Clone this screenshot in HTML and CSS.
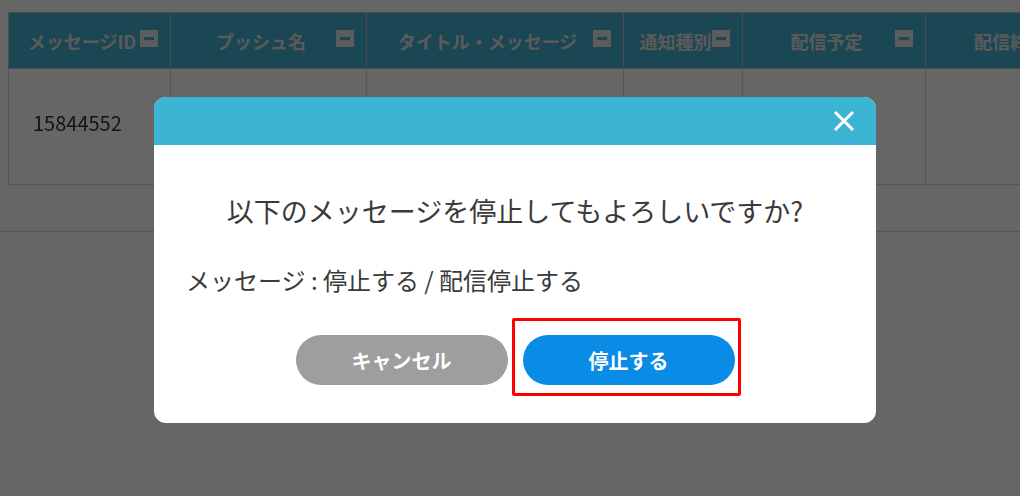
FILE: index.html
```html
<!DOCTYPE html>
<html lang="ja">
<head>
  <meta charset="UTF-8">
  <meta name="viewport" content="width=device-width, initial-scale=1.0">
  <title>メッセージ一覧</title>
  <link rel="stylesheet" href="styles.css">
</head>
<body>

  <div class="page">
    <div class="list">
      <div class="table-wrap">
        <table class="msg-table">
          <colgroup>
            <col class="c-id">
            <col class="c-push">
            <col class="c-title">
            <col class="c-type">
            <col class="c-plan">
            <col class="c-end">
          </colgroup>
          <thead>
            <tr>
              <th>メッセージID<span class="toggle"></span></th>
              <th>プッシュ名<span class="toggle"></span></th>
              <th>タイトル・メッセージ<span class="toggle"></span></th>
              <th>通知種別<span class="toggle"></span></th>
              <th>配信予定<span class="toggle"></span></th>
              <th>配信終了日時<span class="toggle"></span></th>
            </tr>
          </thead>
          <tbody>
            <tr>
              <td class="id-cell">15844552</td>
              <td></td>
              <td class="title-cell">
                <strong>配信停止テスト</strong><br>
                停止する / 配信停止する
              </td>
              <td></td>
              <td></td>
              <td></td>
            </tr>
          </tbody>
        </table>
      </div>
    </div>
  </div>

  <div class="overlay">
    <div class="modal">
      <div class="modal-head">
        <button class="close" type="button" aria-label="閉じる">
          <svg width="22" height="22" viewBox="0 0 22 22">
            <path d="M2 2 L20 20 M20 2 L2 20" stroke="#fff" stroke-width="3" fill="none"/>
          </svg>
        </button>
      </div>
      <div class="modal-body">
        <p class="question">以下のメッセージを停止してもよろしいですか?</p>
        <p class="target">メッセージ : 停止する / 配信停止する</p>
        <div class="actions">
          <button class="btn btn-cancel" type="button">キャンセル</button>
          <div class="highlight">
            <button class="btn btn-stop" type="button">停止する</button>
          </div>
        </div>
      </div>
    </div>
  </div>

</body>
</html>
```

FILE: styles.css
```css
body {
  margin: 0;
  font-family: "Noto Sans CJK JP", "Noto Sans", sans-serif;
  color: #333;
  background-color: #fff;
  overflow: hidden;
}

.page {
  filter: blur(0.5px);
}

.list {
  padding: 12px 0 46px 8px;
  border-bottom: 1px solid #d5d5d5;
}

.table-wrap {
  overflow: hidden;
}

.msg-table {
  width: 1137px;
  table-layout: fixed;
  border-collapse: collapse;
}

.c-id { width: 162px; }
.c-push { width: 196px; }
.c-title { width: 257px; }
.c-type { width: 119px; }
.c-plan { width: 183px; }
.c-end { width: 220px; }

.msg-table th {
  position: relative;
  height: 55px;
  padding: 0 28px 0 13px;
  background-color: #41b2d0;
  color: #e2e2e2;
  font-size: 18px;
  font-weight: bold;
  text-align: center;
  white-space: nowrap;
  border: 1px solid #bbb;
}

.toggle {
  position: absolute;
  top: 17px;
  right: 12px;
  width: 18px;
  height: 17px;
  background-color: #e6e6e6;
}

.toggle::after {
  content: "";
  position: absolute;
  left: 4px;
  right: 4px;
  top: 7px;
  height: 3px;
  background-color: #41b2d0;
}

.msg-table tbody tr {
  height: 116px;
}

.msg-table td {
  padding: 0 24px;
  border: 1px solid #d5d5d5;
  font-size: 20px;
  vertical-align: middle;
}

.msg-table .id-cell {
  padding-bottom: 8px;
}

.msg-table .title-cell {
  padding-top: 23px;
  font-size: 18px;
  line-height: 26px;
  vertical-align: top;
}

.overlay {
  position: fixed;
  inset: 0;
  background-color: rgba(0, 0, 0, 0.6);
}

.modal {
  width: 722px;
  margin: 97px 0 0 154px;
  background-color: #fff;
  border-radius: 12px;
  overflow: hidden;
}

.modal-head {
  height: 48px;
  display: flex;
  align-items: center;
  justify-content: flex-end;
  padding-right: 21px;
  background-color: #3cb4d4;
}

.close {
  display: flex;
  padding: 0;
  border: none;
  background: none;
}

.modal-body {
  padding: 46px 32px 38px;
}

.question {
  margin: 0;
  font-size: 27px;
  line-height: 40px;
  text-align: center;
  color: #3a3a3a;
}

.target {
  margin: 31px 0 0;
  font-size: 24px;
  line-height: 36px;
  color: #3a3a3a;
}

.actions {
  display: flex;
  justify-content: center;
  gap: 15px;
  margin-top: 37px;
}

.btn {
  width: 212px;
  height: 50px;
  border: none;
  border-radius: 25px;
  color: #fff;
  font-family: inherit;
  font-size: 20px;
  font-weight: bold;
}

.btn-cancel {
  background-color: #9e9e9e;
}

.btn-stop {
  display: block;
  background-color: #0a8be6;
}

.highlight {
  position: relative;
}

.highlight::after {
  content: "";
  position: absolute;
  top: -17px;
  left: -11px;
  right: -6px;
  bottom: -11px;
  border: 3px solid #f00;
  border-radius: 2px;
}
```
